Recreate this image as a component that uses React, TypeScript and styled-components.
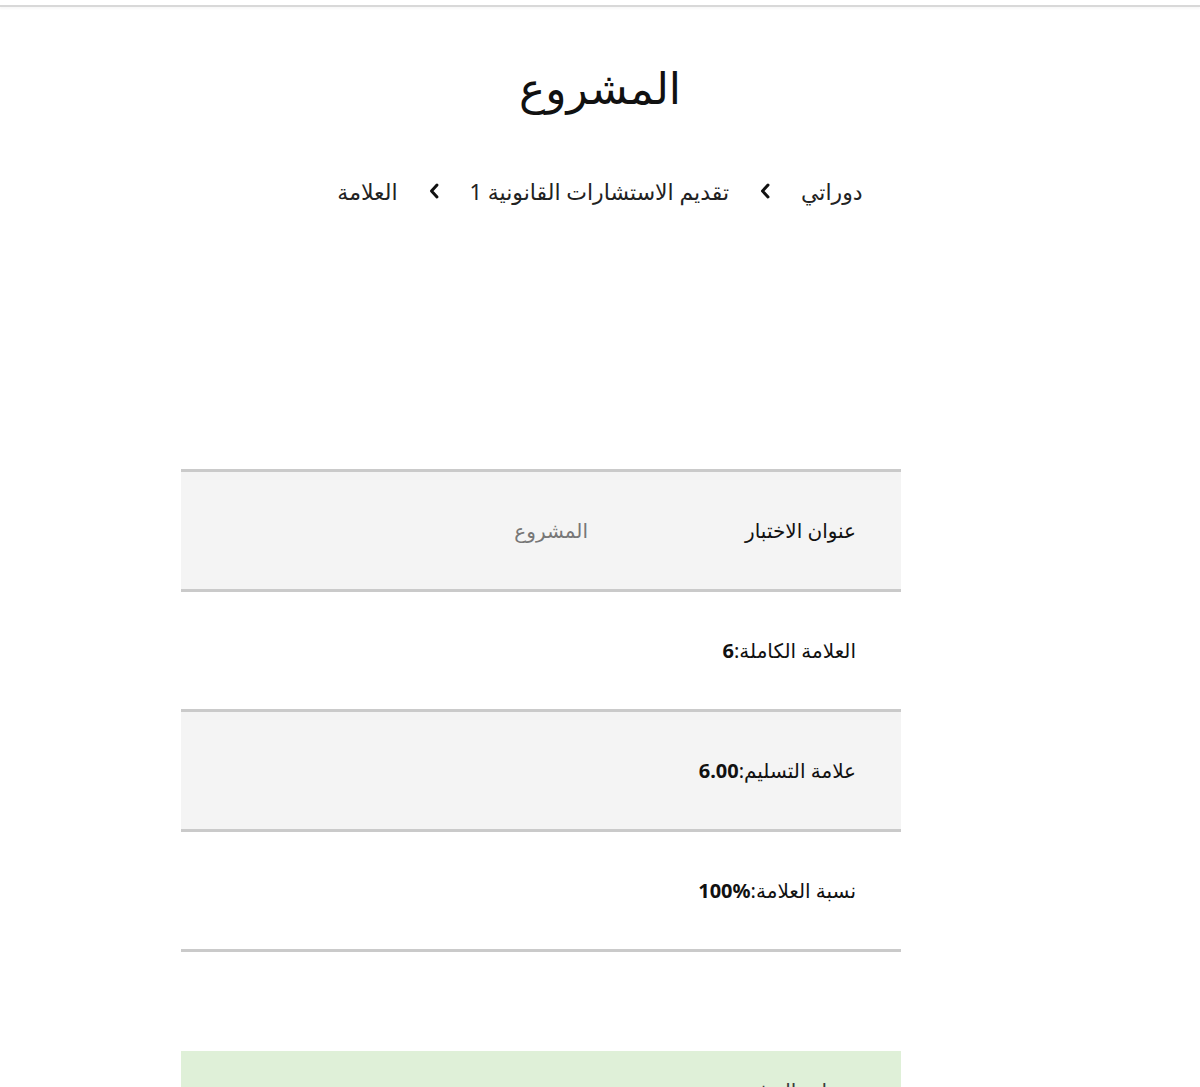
import React from "react";
import styled, { createGlobalStyle } from "styled-components";

const Global = createGlobalStyle`
  html, body { margin: 0; padding: 0; background: #fff; }
  body {
    font-family: "Noto Sans", "DejaVu Sans", sans-serif;
    color: #1a1a1a;
    direction: rtl;
  }
`;

const Page = styled.div`
  width: 1200px;
  min-height: 1087px;
  overflow: hidden;
`;

const TopBar = styled.div`
  height: 5px;
  border-bottom: 2px solid #d8d8d8;
  box-shadow: 0 2px 2px rgba(0, 0, 0, 0.03);
`;

const Title = styled.h1`
  margin: 52px 0 0;
  text-align: center;
  font-size: 44px;
  font-weight: 400;
  line-height: 56px;
  color: #111;
`;

const Crumbs = styled.nav`
  margin-top: 61px;
  display: flex;
  justify-content: center;
  align-items: center;
  font-size: 22px;
  line-height: 30px;
  color: #222;
`;

const Crumb = styled.span`
  white-space: nowrap;
`;

const Sep = styled.span`
  display: inline-flex;
  align-items: center;
  margin: 0 30px;
`;

const Content = styled.div`
  width: 720px;
  margin-top: 263px;
  margin-right: 299px;
`;

const Table = styled.div`
  border-top: 3px solid #cacaca;
`;

const Row = styled.div<{ $shade?: boolean }>`
  height: 117px;
  background: ${(p) => (p.$shade ? "#f4f4f4" : "#fff")};
  border-bottom: 3px solid #cacaca;
  display: flex;
  align-items: center;
  padding-right: 45px;
  font-size: 20px;
  color: #111;
`;

const Label = styled.div`
  width: 268px;
  font-weight: 500;
`;

const Value = styled.div`
  color: #777;
`;

const Strong = styled.b`
  font-weight: 700;
  direction: ltr;
  unicode-bidi: isolate;
`;

const Alert = styled.div`
  margin-top: 99px;
  background: #dff0d8;
  padding: 25px 26px 20px;
  font-size: 20px;
  line-height: 30px;
  color: #3c3c3c;
  height: 60px;
`;

const Chevron = () => (
  <svg width="12" height="18" viewBox="0 0 12 18">
    <path d="M9 3 L3.5 9 L9 15" fill="none" stroke="#111" strokeWidth="3" strokeLinecap="round" strokeLinejoin="round" />
  </svg>
);

export default function App() {
  return (
    <Page>
      <Global />
      <TopBar />
      <Title>المشروع</Title>
      <Crumbs>
        <Crumb>دوراتي</Crumb>
        <Sep><Chevron /></Sep>
        <Crumb>تقديم الاستشارات القانونية 1</Crumb>
        <Sep><Chevron /></Sep>
        <Crumb>العلامة</Crumb>
      </Crumbs>
      <Content>
        <Table>
          <Row $shade>
            <Label>عنوان الاختبار</Label>
            <Value>المشروع</Value>
          </Row>
          <Row>
            <span>العلامة الكاملة:<Strong>6</Strong></span>
          </Row>
          <Row $shade>
            <span>علامة التسليم:<Strong>6.00</Strong></span>
          </Row>
          <Row>
            <span>نسبة العلامة:<Strong>100%</Strong></span>
          </Row>
        </Table>
        <Alert>تم تسليم المشروع</Alert>
      </Content>
    </Page>
  );
}
